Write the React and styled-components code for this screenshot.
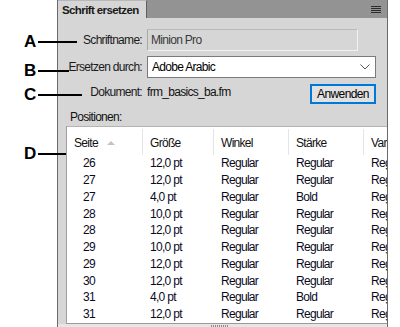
import React from "react";
import styled, { createGlobalStyle } from "styled-components";

const GlobalStyle = createGlobalStyle`
  body {
    margin: 0;
    background: #ffffff;
    font-family: "Liberation Sans", Arial, sans-serif;
  }
`;

const rows = [
  ["26", "12,0 pt", "Regular", "Regular", "Regular"],
  ["27", "12,0 pt", "Regular", "Regular", "Regular"],
  ["27", "4,0 pt", "Regular", "Bold", "Regular"],
  ["28", "10,0 pt", "Regular", "Regular", "Regular"],
  ["28", "12,0 pt", "Regular", "Regular", "Regular"],
  ["29", "10,0 pt", "Regular", "Regular", "Regular"],
  ["29", "12,0 pt", "Regular", "Regular", "Regular"],
  ["30", "12,0 pt", "Regular", "Regular", "Regular"],
  ["31", "4,0 pt", "Regular", "Bold", "Regular"],
  ["31", "12,0 pt", "Regular", "Regular", "Regular"],
];

const columns = [
  { title: "Seite", width: 76, sort: true },
  { title: "Größe", width: 71 },
  { title: "Winkel", width: 75 },
  { title: "Stärke", width: 75 },
  { title: "Variante", width: 75 },
];

const callouts = [
  { letter: "A", top: 42, length: 39 },
  { letter: "B", top: 71, length: 31 },
  { letter: "C", top: 95, length: 44 },
  { letter: "D", top: 154, length: 28 },
];

const App = () => {
  return (
    <Page>
      <GlobalStyle />
      {callouts.map((c) => (
        <Callout key={c.letter} $top={c.top}>
          <CalloutLetter>{c.letter}</CalloutLetter>
          <CalloutLine $length={c.length} />
        </Callout>
      ))}
      <Panel>
        <TopStrip />
        <TabBar>
          <Tab>Schrift ersetzen</Tab>
          <Menu>
            <span />
            <span />
            <span />
            <span />
          </Menu>
        </TabBar>
        <Body>
          <Form>
            <Label>Schriftname:</Label>
            <ReadOnlyField>Minion Pro</ReadOnlyField>
            <Label>Ersetzen durch:</Label>
            <Dropdown>
              Adobe Arabic
              <svg width="10" height="6" viewBox="0 0 10 6">
                <path d="M0.5 0.5 L5 5 L9.5 0.5" fill="none" stroke="#555" strokeWidth="1" />
              </svg>
            </Dropdown>
            <Label $up>Dokument:</Label>
            <DocRow>
              <span>frm_basics_ba.fm</span>
              <Button>Anwenden</Button>
            </DocRow>
          </Form>
          <SectionLabel>Positionen:</SectionLabel>
          <TableBox>
            <Table>
              <HeaderRow>
                {columns.map((col) => (
                  <HeaderCell key={col.title} $width={col.width}>
                    {col.title}
                    {col.sort && <SortArrow />}
                  </HeaderCell>
                ))}
              </HeaderRow>
              {rows.map((row, i) => (
                <Row key={i}>
                  {row.map((value, j) => (
                    <Cell key={j} $width={columns[j].width} $indent={j === 0}>
                      {value}
                    </Cell>
                  ))}
                </Row>
              ))}
            </Table>
          </TableBox>
          <Scrollbar>
            <Grip />
          </Scrollbar>
        </Body>
      </Panel>
    </Page>
  );
};

const Page = styled.div`
  position: relative;
  width: 400px;
  height: 327px;
  overflow: hidden;
  display: flex;
  padding-left: 57px;
  box-sizing: border-box;
`;

const Callout = styled.div`
  position: absolute;
  left: 24px;
  top: ${(p) => p.$top - 10}px;
  height: 20px;
  display: flex;
  align-items: center;
  gap: 3px;
  z-index: 2;
`;

const CalloutLetter = styled.span`
  font-weight: bold;
  font-size: 17px;
  color: #000;
  width: 11px;
`;

const CalloutLine = styled.span`
  display: block;
  width: ${(p) => p.$length}px;
  height: 2px;
  background: #000;
`;

const Panel = styled.div`
  width: 331px;
  height: 327px;
  display: flex;
  flex-direction: column;
  background: #d6d6d6;
  border-left: 1px solid #6a6a6a;
  border-right: 1px solid #6a6a6a;
  box-sizing: border-box;
  letter-spacing: -0.7px;
`;

const TopStrip = styled.div`
  height: 3px;
  background: #6e6e6e;
`;

const TabBar = styled.div`
  height: 18px;
  display: flex;
  align-items: flex-end;
  justify-content: space-between;
  background: #939393;
`;

const Tab = styled.div`
  height: 17px;
  padding: 0 7px 0 4px;
  display: flex;
  align-items: center;
  background: #d6d6d6;
  border-top: 1px solid #b8b8b8;
  border-right: 1px solid #5e5e5e;
  font-weight: bold;
  font-size: 11.5px;
  letter-spacing: -0.6px;
  color: #1a1a1a;
`;

const Menu = styled.div`
  align-self: center;
  display: flex;
  flex-direction: column;
  gap: 1px;
  margin-right: 6px;
  span {
    display: block;
    width: 10px;
    height: 1px;
    background: #2b2b2b;
  }
`;

const Body = styled.div`
  flex: 1;
  display: flex;
  flex-direction: column;
  padding-top: 11px;
  font-size: 12px;
  color: #111;
`;

const Form = styled.div`
  display: grid;
  grid-template-columns: 84px 1fr;
  column-gap: 5px;
  row-gap: 5px;
  align-items: center;
  padding-right: 11px;
`;

const Label = styled.div`
  text-align: right;
  white-space: nowrap;
  color: #1a1a1a;
  align-self: ${(p) => (p.$up ? "start" : "center")};
  margin-top: ${(p) => (p.$up ? 2 : 0)}px;
`;

const ReadOnlyField = styled.div`
  height: 22px;
  width: 211px;
  box-sizing: border-box;
  display: flex;
  align-items: center;
  padding-left: 3px;
  border: 1px solid #f2f2f2;
  border-left-color: #a9a9a9;
  border-top-color: #b9b9b9;
  color: #3a3a3a;
`;

const Dropdown = styled.div`
  height: 22px;
  box-sizing: border-box;
  display: flex;
  align-items: center;
  justify-content: space-between;
  padding: 0 5px 0 4px;
  background: #fff;
  border: 1px solid #7a7a7a;
  color: #000;
`;

const DocRow = styled.div`
  display: flex;
  align-items: flex-start;
  justify-content: space-between;
  height: 23px;
  span {
    margin-top: 2px;
  }
`;

const Button = styled.button`
  width: 66px;
  height: 20px;
  padding: 0;
  font-family: inherit;
  font-size: 12px;
  letter-spacing: -0.6px;
  color: #000;
  background: #e1e1e1;
  border: 2px solid #0078d7;
  margin-top: 1px;
`;

const SectionLabel = styled.div`
  margin: 4px 0 2px 12px;
  height: 14px;
  line-height: 14px;
`;

const TableBox = styled.div`
  flex: 1;
  margin-left: 8px;
  background: #fff;
  border-left: 1px solid #a0a0a0;
  border-top: 1px solid #b4b4b4;
  border-bottom: 1px solid #9a9a9a;
  overflow: hidden;
  font-size: 12px;
`;

const Table = styled.div`
  width: 400px;
`;

const HeaderRow = styled.div`
  display: flex;
  height: 28px;
  align-items: stretch;
`;

const HeaderCell = styled.div`
  flex: none;
  width: ${(p) => p.$width}px;
  box-sizing: border-box;
  padding: 2px 0 0 7px;
  display: flex;
  align-items: center;
  border-right: 1px solid #e5e5e5;
  margin: 2px 0 0;
  color: #111;
`;

const SortArrow = styled.span`
  margin-left: 9px;
  width: 0;
  height: 0;
  border-left: 4px solid transparent;
  border-right: 4px solid transparent;
  border-bottom: 4px solid #c3c3c3;
`;

const Row = styled.div`
  display: flex;
  height: 16.75px;
  align-items: center;
`;

const Cell = styled.div`
  flex: none;
  width: ${(p) => p.$width}px;
  box-sizing: border-box;
  padding-left: ${(p) => (p.$indent ? 16 : 7)}px;
  color: #0a0a1e;
  white-space: nowrap;
`;

const Scrollbar = styled.div`
  height: 4px;
  background: #e6e6e6;
  display: flex;
  justify-content: center;
`;

const Grip = styled.div`
  width: 17px;
  height: 3px;
  margin-top: 1px;
  margin-left: -6px;
  background: repeating-linear-gradient(90deg, #8a8a8a 0 1px, transparent 1px 2px);
`;

export default App;
